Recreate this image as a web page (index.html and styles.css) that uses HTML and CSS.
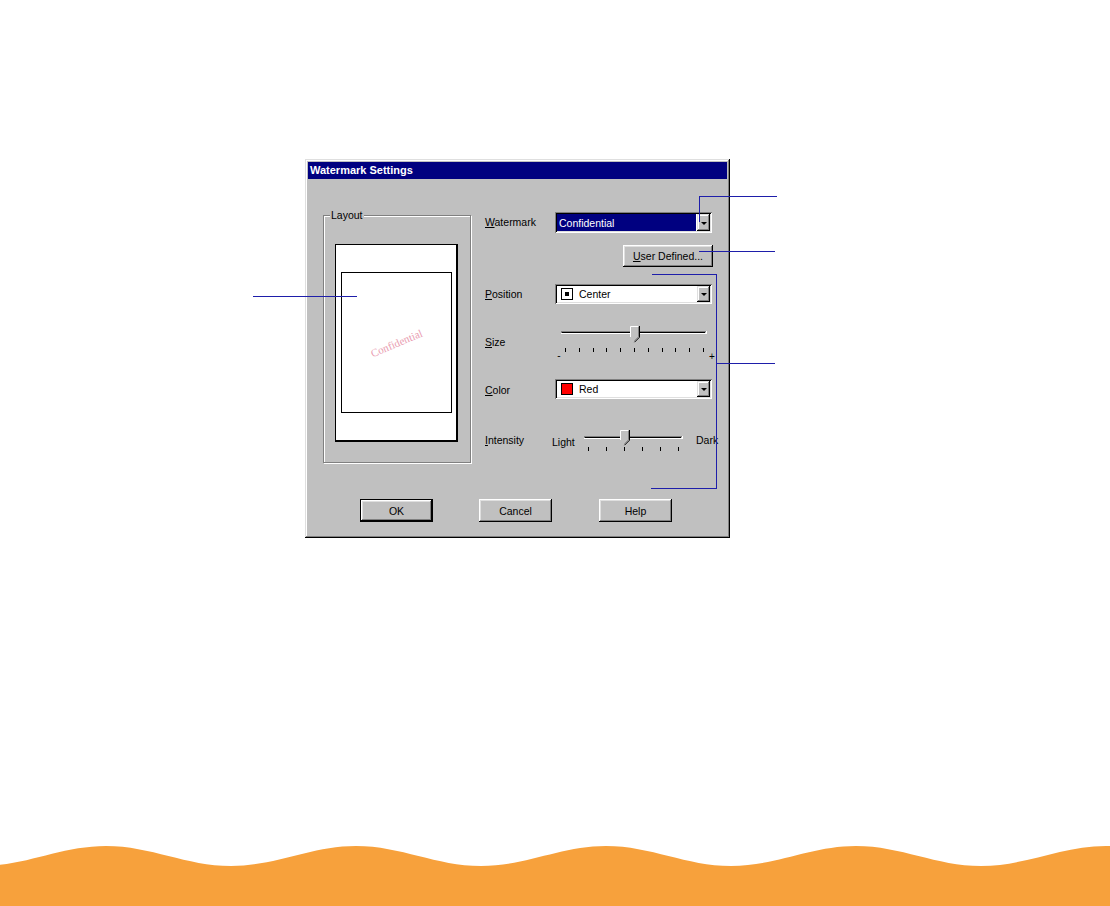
FILE: index.html
```html
<!DOCTYPE html>
<html>
<head>
<meta charset="utf-8">
<title>Watermark Settings</title>
<link rel="stylesheet" href="styles.css">
</head>
<body>
<div class="page">
  <div class="dialog">
    <div class="titlebar">Watermark Settings</div>
    <div class="dialog-body">
      <div class="top-row">
        <div class="group">
          <span class="group-label">Layout</span>
          <div class="paper">
            <div class="print-area"><span class="wm-text">Confidential</span></div>
          </div>
        </div>
        <div class="form">
          <div class="row row-watermark">
            <span class="label"><u>W</u>atermark</span>
            <div class="combo">
              <div class="combo-value selected">Confidential</div>
              <div class="combo-btn"><span class="tri"></span></div>
            </div>
          </div>
          <div class="row row-btn">
            <button class="btn btn-user"><u>U</u>ser Defined...</button>
          </div>
          <div class="row row-position">
            <span class="label"><u>P</u>osition</span>
            <div class="combo">
              <div class="combo-value"><span class="swatch swatch-center"></span>Center</div>
              <div class="combo-btn"><span class="tri"></span></div>
            </div>
          </div>
          <div class="row row-size">
            <span class="label label-size"><u>S</u>ize</span>
            <svg class="slider-size" width="165" height="40" viewBox="0 0 165 40">
              <rect x="6" y="9" width="145" height="1" fill="#808080"/>
              <rect x="6" y="10" width="1" height="2" fill="#808080"/>
              <rect x="7" y="10" width="143" height="1" fill="#000"/>
              <rect x="6" y="11" width="146" height="1" fill="#fff"/>
              <rect x="151" y="9" width="1" height="3" fill="#fff"/>
              <path d="M75 4H84V15L79.5 19.5L75 15Z" fill="#c0c0c0"/>
              <path d="M75.5 15V4.5H83" fill="none" stroke="#fff"/>
              <path d="M84.5 4V15.2L79.5 20.2" fill="none" stroke="#000"/>
              <path d="M83.5 5V14.8L79.5 18.8" fill="none" stroke="#808080"/>
              <path d="M10.5 26V30M24.5 26V30M38.5 26V30M51.5 26V30M65.5 26V30M79.5 26V30M93.5 26V30M107.5 26V30M120.5 26V30M134.5 26V30M148.5 26V30" stroke="#000"/>
              <text x="4" y="37" class="svg-text" text-anchor="middle">-</text>
              <text x="157" y="38" class="svg-text" text-anchor="middle">+</text>
            </svg>
          </div>
          <div class="row row-color">
            <span class="label"><u>C</u>olor</span>
            <div class="combo">
              <div class="combo-value"><span class="swatch swatch-red"></span>Red</div>
              <div class="combo-btn"><span class="tri"></span></div>
            </div>
          </div>
          <div class="row row-intensity">
            <span class="label label-int"><u>I</u>ntensity</span>
            <span class="light">Light</span>
            <svg class="slider-int" width="110" height="30" viewBox="0 0 110 30">
              <rect x="0" y="11" width="98" height="1" fill="#808080"/>
              <rect x="0" y="12" width="1" height="2" fill="#808080"/>
              <rect x="1" y="12" width="96" height="1" fill="#000"/>
              <rect x="0" y="13" width="99" height="1" fill="#fff"/>
              <rect x="98" y="11" width="1" height="3" fill="#fff"/>
              <path d="M36 5H45V15L40.5 19.5L36 15Z" fill="#c0c0c0"/>
              <path d="M36.5 15V5.5H44" fill="none" stroke="#fff"/>
              <path d="M45.5 5V15.2L40.5 20.2" fill="none" stroke="#000"/>
              <path d="M44.5 6V14.8L40.5 18.8" fill="none" stroke="#808080"/>
              <path d="M4.5 22V26M22.5 22V26M40.5 22V26M58.5 22V26M76.5 22V26M94.5 22V26" stroke="#000"/>
            </svg>
            <span class="dark">Dark</span>
          </div>
        </div>
      </div>
      <div class="buttons">
        <button class="btn btn-dlg btn-default">OK</button>
        <button class="btn btn-dlg btn-cancel">Cancel</button>
        <button class="btn btn-dlg btn-help">Help</button>
      </div>
    </div>
  </div>

  <div class="callout c1v"></div>
  <div class="callout c1h"></div>
  <div class="callout c2"></div>
  <div class="callout c3t"></div>
  <div class="callout c3v"></div>
  <div class="callout c3b"></div>
  <div class="callout c3m"></div>
  <div class="callout c4"></div>

  <div class="footer">
    <svg class="wave" width="1110" height="66" viewBox="0 840 1110 66" preserveAspectRatio="none">
      <path d="M-144 846 C-98.6 846 -64.4 866 -19 866 S60.6 846 106 846 S185.6 866 231 866 S310.6 846 356 846 S435.6 866 481 866 S560.6 846 606 846 S685.6 866 731 866 S810.6 846 856 846 S935.6 866 981 866 S1060.6 846 1106 846 S1185.6 866 1231 866 V906 H-144 Z" fill="#f7a13c"/>
    </svg>
  </div>
</div>
</body>
</html>
```

FILE: styles.css
```css
html, body {
  margin: 0;
  padding: 0;
  background: #fff;
}

.page {
  position: relative;
  width: 1110px;
  height: 906px;
  background: #fff;
  display: flex;
  flex-direction: column;
  overflow: hidden;
  font-family: "Liberation Sans", Arial, sans-serif;
}

.dialog {
  width: 425px;
  height: 379px;
  margin: 159px 0 0 305px;
  box-sizing: border-box;
  padding: 3px;
  background: #c0c0c0;
  box-shadow: inset -1px -1px #000, inset 1px 1px #dfdfdf, inset -2px -2px #808080, inset 2px 2px #fff;
  display: flex;
  flex-direction: column;
  flex-shrink: 0;
}

.titlebar {
  height: 17px;
  background: #000080;
  color: #fff;
  font-weight: bold;
  font-size: 11px;
  line-height: 17px;
  padding-left: 2px;
  white-space: nowrap;
}

.dialog-body {
  flex: 1;
  display: flex;
  flex-direction: column;
  font-size: 10.5px;
  color: #000;
}

.top-row {
  display: flex;
  align-items: flex-start;
}

.group {
  position: relative;
  width: 148px;
  height: 248px;
  box-sizing: border-box;
  margin: 36px 0 0 15px;
  border: 1px solid #808080;
  box-shadow: inset 1px 1px #fff, 1px 1px #fff;
  flex-shrink: 0;
}

.group-label {
  position: absolute;
  top: -7px;
  left: 6px;
  padding: 0 1px;
  background: #c0c0c0;
  line-height: 13px;
}

.paper {
  width: 120px;
  height: 195px;
  margin: 28px 0 0 11px;
  background: #fff;
  border: 1px solid #000;
  border-right-width: 2px;
  border-bottom-width: 2px;
  display: flex;
  flex-direction: column;
}

.print-area {
  width: 109px;
  height: 139px;
  margin: 27px 0 0 5px;
  border: 1px solid #000;
  display: flex;
  align-items: center;
  justify-content: center;
}

.wm-text {
  font-family: "Liberation Serif", "Times New Roman", serif;
  font-size: 11px;
  color: #e99cb0;
  transform: rotate(-23deg);
}

.form {
  width: 228px;
  margin: 33px 0 0 14px;
  display: flex;
  flex-direction: column;
  flex-shrink: 0;
}

.row {
  display: flex;
  align-items: center;
}

.label {
  width: 70px;
  flex-shrink: 0;
  line-height: 13px;
  white-space: nowrap;
}

.row-watermark { height: 21px; }
.row-btn { height: 22px; margin-top: 12px; justify-content: flex-end; }
.row-position { height: 20px; margin-top: 17px; }
.row-size { height: 75px; align-items: flex-start; }
.row-color { height: 20px; }
.row-color .label { padding-top: 3px; }
.row-intensity { height: 64px; align-items: flex-start; }

.label-size { margin-top: 32px; }

.slider-size {
  display: block;
  flex-shrink: 0;
  margin-top: 18px;
  overflow: visible;
}

.svg-text {
  font-family: "Liberation Sans", Arial, sans-serif;
  font-size: 10px;
  fill: #000;
}

.label-int { width: 67px; margin-top: 35px; }

.light {
  width: 32px;
  flex-shrink: 0;
  margin-top: 37px;
  line-height: 13px;
}

.slider-int {
  display: block;
  flex-shrink: 0;
  margin-top: 26px;
}

.dark {
  flex-shrink: 0;
  margin: 35px 0 0 2px;
  line-height: 13px;
  white-space: nowrap;
}

.combo {
  width: 157px;
  height: 100%;
  box-sizing: border-box;
  padding: 2px;
  background: #fff;
  box-shadow: inset 1px 1px #808080, inset -1px -1px #fff, inset 2px 2px #000, inset -2px -2px #dfdfdf;
  display: flex;
  flex-shrink: 0;
}

.combo-value {
  flex: 1;
  display: flex;
  align-items: center;
  gap: 6px;
  padding-left: 4px;
  white-space: nowrap;
}

.combo-value.selected {
  background: #000080;
  color: #fff;
  padding-left: 2px;
  margin-right: 1px;
}

.combo-btn {
  width: 13px;
  background: #c0c0c0;
  box-shadow: inset -1px -1px #000, inset 1px 1px #dfdfdf, inset -2px -2px #808080, inset 2px 2px #fff;
  display: flex;
  align-items: center;
  justify-content: center;
}

.tri {
  width: 0;
  height: 0;
  border-left: 3px solid transparent;
  border-right: 3px solid transparent;
  border-top: 3px solid #000;
  margin-top: 1px;
}

.swatch {
  width: 10px;
  height: 10px;
  border: 1px solid #000;
  display: flex;
  align-items: center;
  justify-content: center;
  flex-shrink: 0;
}

.swatch-center::after {
  content: "";
  width: 4px;
  height: 4px;
  background: #000;
}

.swatch-red { background: #f00; }

.btn {
  font-family: inherit;
  font-size: 10.5px;
  color: #000;
  background: #c0c0c0;
  border: 0;
  padding: 0;
  margin: 0;
  box-shadow: inset -1px -1px #000, inset 1px 1px #fff, inset -2px -2px #808080, inset 2px 2px #dfdfdf;
  white-space: nowrap;
  flex-shrink: 0;
}

.btn-user { width: 90px; height: 22px; }

.buttons {
  display: flex;
  margin: 36px 0 0 52px;
}

.btn-dlg { width: 73px; height: 23px; }

.btn-default {
  box-shadow: inset 0 0 0 1px #000, inset -2px -2px #000, inset 2px 2px #fff, inset -3px -3px #808080, inset 3px 3px #dfdfdf;
}

.btn-cancel { margin-left: 46px; }
.btn-help { margin-left: 47px; }

.callout {
  position: absolute;
  background: #1e1eaa;
}

.c1v { left: 699px; top: 196px; width: 1px; height: 26px; }
.c1h { left: 699px; top: 196px; width: 78px; height: 1px; }
.c2 { left: 699px; top: 251px; width: 76px; height: 1px; }
.c3t { left: 652px; top: 274px; width: 65px; height: 1px; }
.c3v { left: 716px; top: 274px; width: 1px; height: 215px; }
.c3b { left: 651px; top: 488px; width: 66px; height: 1px; }
.c3m { left: 716px; top: 363px; width: 59px; height: 1px; }
.c4 { left: 253px; top: 296px; width: 104px; height: 1px; }

.footer {
  margin-top: auto;
  height: 66px;
}

.wave {
  display: block;
}
```
